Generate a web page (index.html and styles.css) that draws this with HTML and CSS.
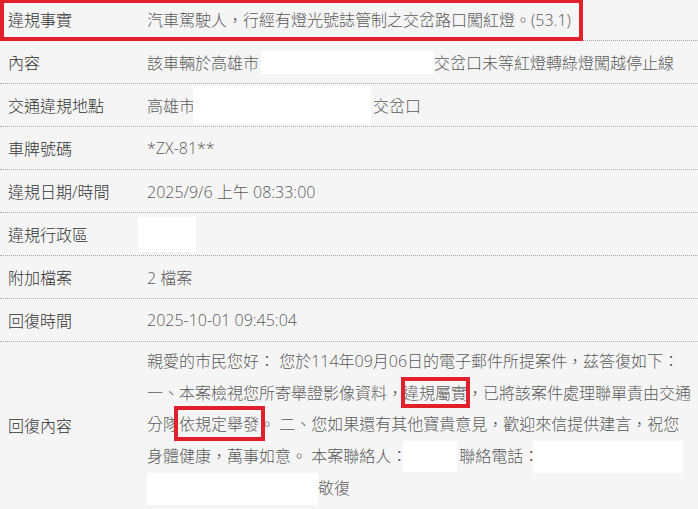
FILE: index.html
```html
<!DOCTYPE html>
<html lang="zh-Hant">
<head>
<meta charset="utf-8">
<title>案件回復</title>
<link rel="stylesheet" href="styles.css">
</head>
<body>
<div class="sheet">
  <div class="row">
    <div class="label">違規事實</div>
    <div class="value">汽車駕駛人，行經有燈光號誌管制之交岔路口闖紅燈。(53.1)</div>
    <div class="mark mark-row"></div>
  </div>
  <div class="row">
    <div class="label">內容</div>
    <div class="value">該車輛於高雄市<span class="blank blank-a"></span>交岔口未等紅燈轉綠燈闖越停止線</div>
  </div>
  <div class="row">
    <div class="label">交通違規地點</div>
    <div class="value">高雄市<span class="blank blank-b"></span>交岔口</div>
  </div>
  <div class="row">
    <div class="label">車牌號碼</div>
    <div class="value">*ZX-81**</div>
  </div>
  <div class="row">
    <div class="label">違規日期/時間</div>
    <div class="value">2025/9/6 上午 08:33:00</div>
  </div>
  <div class="row">
    <div class="label">違規行政區</div>
    <div class="value"><span class="blank blank-c"></span></div>
  </div>
  <div class="row">
    <div class="label">附加檔案</div>
    <div class="value">2 檔案</div>
  </div>
  <div class="row">
    <div class="label">回復時間</div>
    <div class="value">2025-10-01 09:45:04</div>
  </div>
  <div class="row row-reply">
    <div class="label">回復內容</div>
    <div class="value reply">親愛的市民您好： 您於114年09月06日的電子郵件所提案件，茲答復如下：一、本案檢視您所寄舉證影像資料，<span class="hl hl-a">違規屬實</span>，已將該案件處理聯單責由交通分隊<span class="hl hl-b">依規定舉發</span>。 二、您如果還有其他寶貴意見，歡迎來信提供建言，祝您身體健康，萬事如意。 本案聯絡人：<span class="blank blank-d"></span>聯絡電話：<span class="blank blank-e"></span><span class="blank blank-f"></span>敬復</div>
  </div>
</div>
</body>
</html>
```

FILE: styles.css
```css
html, body {
  margin: 0;
  padding: 0;
  background: #f5f5f5;
}

body {
  font-family: "Open Sans", "Noto Sans CJK TC", sans-serif;
  font-size: 16px;
  font-weight: 300;
  overflow: hidden;
}

.sheet {
  margin-top: -2px;
}

.row {
  position: relative;
  display: grid;
  grid-template-columns: 139px 546px;
  padding-left: 8px;
  height: 42px;
  align-items: center;
  border-bottom: 1px dotted #a8a8a8;
}

.label {
  color: #333;
  white-space: nowrap;
}

.value {
  color: #5a5a5a;
  white-space: nowrap;
  display: flex;
  align-items: center;
}

.row-reply {
  height: auto;
  padding-top: 4px;
  padding-bottom: 4px;
  border-bottom: none;
}

.reply {
  display: block;
  white-space: normal;
  line-height: 31.5px;
  word-break: break-all;
}

.blank {
  display: inline-block;
  background: #fff;
}

.blank-a { width: 173px; height: 23px; margin-left: 2px; }
.blank-b { width: 178px; height: 38px; margin-left: -2px; margin-right: 2px; }
.blank-c { width: 58px; height: 35px; margin-left: -9px; }
.blank-d { width: 54px; height: 31px; vertical-align: top; margin-left: -4px; margin-right: 2px; }
.blank-e { width: 150px; height: 32px; vertical-align: top; margin-left: -6px; }
.blank-f { width: 171px; height: 32px; vertical-align: top; }

.mark {
  position: absolute;
  border: 4px solid #e0202b;
  box-sizing: border-box;
  pointer-events: none;
}

.mark-row {
  left: 0;
  top: 1px;
  width: 583px;
  height: 42px;
}

.hl {
  position: relative;
}

.hl::after {
  content: "";
  position: absolute;
  border: 4px solid #e0202b;
  box-sizing: border-box;
}

.hl-a::after {
  left: -2px;
  right: -3px;
  top: -5px;
  bottom: -4px;
}

.hl-b::after {
  left: -5px;
  right: -6px;
  top: -7px;
  bottom: -6px;
}
```
